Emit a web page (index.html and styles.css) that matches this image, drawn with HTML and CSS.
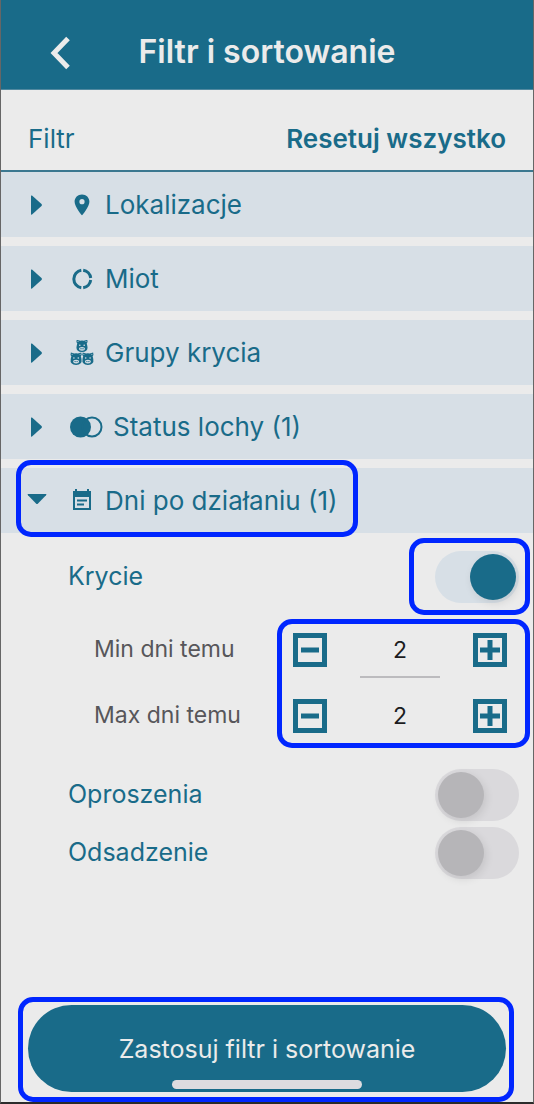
FILE: index.html
```
<!DOCTYPE html>
<html lang="pl">

<head>
    <meta charset="UTF-8">
    <meta name="viewport" content="width=device-width, initial-scale=1.0">
    <title>Filtr i sortowanie</title>
    <link rel="stylesheet" href="styles.css">
</head>

<body>
    <div class="app">
        <!-- Header -->
        <header class="header">
            <button class="back-button" type="button" aria-label="Wstecz">
                <svg width="22" height="34" viewBox="0 0 22 34">
                    <path d="M19 2.500L5 17L19 31.500" fill="none" stroke="currentColor" stroke-width="5" />
                </svg>
            </button>
            <h1 class="title">Filtr i sortowanie</h1>
        </header>

        <div class="toolbar">
            <h2 class="toolbar-title">Filtr</h2>
            <button class="reset-button" type="button">Resetuj wszystko</button>
        </div>

        <main class="filters">
            <button class="filter" type="button" aria-expanded="false">
                <span class="filter-content">
                    <svg class="arrow" viewBox="0 0 20 20"><path d="M4 1Q4 0 5 0.6L14.5 9Q15.5 10 14.5 11L5 19.4Q4 20 4 19Z" /></svg>
                    <svg class="icon" viewBox="0 0 26 26">
                        <path fill-rule="evenodd" d="M13 2.500C8.700 2.500 5.600 5.700 5.600 9.700C5.600 14.800 13 23.300 13 23.300S20.400 14.800 20.400 9.700C20.400 5.700 17.300 2.500 13 2.500ZM13 7.100A2.600 2.600 0 1 1 13 12.300A2.600 2.600 0 0 1 13 7.100Z" />
                    </svg>
                    <span>Lokalizacje</span>
                </span>
            </button>
            <button class="filter" type="button" aria-expanded="false">
                <span class="filter-content">
                    <svg class="arrow" viewBox="0 0 20 20"><path d="M4 1Q4 0 5 0.6L14.5 9Q15.5 10 14.5 11L5 19.4Q4 20 4 19Z" /></svg>
                    <svg class="icon" viewBox="0 0 26 26">
                        <g fill="none" stroke="currentColor" stroke-width="3">
                            <path d="M14.200 4.300A8.800 8.800 0 0 1 21.700 12" />
                            <path d="M21.700 14A8.800 8.800 0 0 1 14.200 21.700" />
                            <path d="M12.300 21.700A8.800 8.800 0 0 1 12.300 4.300" />
                        </g>
                    </svg>
                    <span>Miot</span>
                </span>
            </button>
            <button class="filter" type="button" aria-expanded="false">
                <span class="filter-content">
                    <svg class="arrow" viewBox="0 0 20 20"><path d="M4 1Q4 0 5 0.6L14.5 9Q15.5 10 14.5 11L5 19.4Q4 20 4 19Z" /></svg>
                    <svg class="icon" viewBox="0 0 26 26">
                        <defs>
                            <g id="pig">
                                <path d="M0.800 0.300L4.200 1.200Q6 0.700 7.800 1.200L11.200 0.300Q12.100 2.500 10.700 4Q11.200 5.300 11.400 7Q12.400 12.400 6 12.600Q-0.400 12.400 0.600 7Q0.800 5.300 1.300 4Q-0.100 2.500 0.800 0.300Z" />
                                <g fill="#d7dfe6">
                                    <circle cx="2" cy="2" r="0.500" />
                                    <circle cx="10" cy="2" r="0.500" />
                                    <circle cx="3.800" cy="5.700" r="0.800" />
                                    <circle cx="8.200" cy="5.700" r="0.800" />
                                    <ellipse cx="6" cy="9.300" rx="2.900" ry="1.900" />
                                </g>
                                <circle cx="5" cy="9.300" r="0.700" />
                                <circle cx="7" cy="9.300" r="0.700" />
                            </g>
                        </defs>
                        <use href="#pig" x="7" y="-0.500" />
                        <use href="#pig" x="1.100" y="12.300" />
                        <use href="#pig" x="12.900" y="12.300" />
                    </svg>
                    <span>Grupy krycia</span>
                </span>
            </button>
            <button class="filter" type="button" aria-expanded="false">
                <span class="filter-content">
                    <svg class="arrow" viewBox="0 0 20 20"><path d="M4 1Q4 0 5 0.6L14.5 9Q15.5 10 14.5 11L5 19.4Q4 20 4 19Z" /></svg>
                    <svg class="icon icon-wide" viewBox="0 0 34 26">
                        <circle cx="11.500" cy="13" r="10.500" />
                        <circle cx="23" cy="13" r="9.500" fill="none" stroke="currentColor" stroke-width="2" />
                    </svg>
                    <span>Status lochy (1)</span>
                </span>
            </button>
            <button class="filter" type="button" aria-expanded="true" aria-controls="days-panel">
                <span class="filter-content highlight highlight-filter">
                    <svg class="arrow" viewBox="0 0 20 20"><path d="M1 3Q0 3 1 4.200L9 12.500Q10 13.500 11 12.500L19 4.200Q20 3 19 3Z" /></svg>
                    <svg class="icon" viewBox="0 0 26 26">
                        <path fill-rule="evenodd" d="M6 1H8V3H18V1H20V3H22V22H4V3H6ZM6 9V20H20V9Z" />
                        <path d="M8 11.500H18V13.500H8ZM8 15.500H15V17.500H8Z" />
                    </svg>
                    <span>Dni po działaniu (1)</span>
                </span>
            </button>
        </main>

        <!-- Expanded panel -->
        <section class="panel" id="days-panel">
            <div class="option option-open">
                <label for="mating">Krycie</label>
                <span class="highlight highlight-toggle">
                    <input class="toggle" type="checkbox" id="mating" checked>
                </span>
            </div>

            <div class="ranges">
                <div class="range-labels">
                    <label for="min-days">Min dni temu</label>
                    <label for="max-days">Max dni temu</label>
                </div>
                <div class="steppers highlight highlight-steppers">
                    <div class="stepper">
                        <button class="step" type="button" aria-label="Zmniejsz min">
                            <svg viewBox="0 0 34 34"><path d="M8 17H26" /></svg>
                        </button>
                        <input class="days underlined" type="text" inputmode="numeric" id="min-days" value="2">
                        <button class="step" type="button" aria-label="Zwiększ min">
                            <svg viewBox="0 0 34 34"><path d="M7 17H27M17 7V27" /></svg>
                        </button>
                    </div>
                    <div class="stepper">
                        <button class="step" type="button" aria-label="Zmniejsz max">
                            <svg viewBox="0 0 34 34"><path d="M8 17H26" /></svg>
                        </button>
                        <input class="days" type="text" inputmode="numeric" id="max-days" value="2">
                        <button class="step" type="button" aria-label="Zwiększ max">
                            <svg viewBox="0 0 34 34"><path d="M7 17H27M17 7V27" /></svg>
                        </button>
                    </div>
                </div>
            </div>

            <div class="option">
                <label for="farrowing">Oproszenia</label>
                <input class="toggle" type="checkbox" id="farrowing">
            </div>
            <div class="option">
                <label for="weaning">Odsadzenie</label>
                <input class="toggle" type="checkbox" id="weaning">
            </div>
        </section>

        <footer class="footer">
            <div class="apply highlight highlight-apply">
                <button class="apply-button" type="button">Zastosuj filtr i sortowanie</button>
                <div class="home-bar"></div>
            </div>
        </footer>
    </div>
</body>

</html>
```
FILE: styles.css
```
* {
    box-sizing: border-box;
}

body {
    margin: 0;
    background-color: #ebebeb;
    color: #196b89;
    font-family: Inter, 'Liberation Sans', sans-serif;
    font-size: 25px;
}

button {
    border: 0;
    padding: 0;
    background: none;
    color: inherit;
    font: inherit;
    cursor: pointer;
}

svg {
    display: block;
    fill: currentColor;
    flex: none;
}

.app {
    display: flex;
    flex-direction: column;
    min-height: 100vh;
    border: 1px solid #666;
    border-top: 0;
    border-bottom: 2px solid #2b2b2b;
}

/* Header */
.header {
    display: grid;
    grid-template-columns: 48px 1fr 48px;
    align-items: center;
    height: 90px;
    padding: 14px 24px 0;
    background-color: #196b89;
    border-bottom: 1px solid #5189a0;
    color: #ebebeb;
}

.back-button {
    padding: 2px 0 0 24px;
}

.title {
    margin: 0;
    font-size: 32px;
    font-weight: 600;
    text-align: center;
    white-space: nowrap;
}

.toolbar {
    display: flex;
    align-items: center;
    justify-content: space-between;
    height: 82px;
    padding: 16px 27px 0;
    border-bottom: 2px solid #3b7890;
}

.toolbar-title {
    margin: 0;
    font-size: 26px;
    font-weight: 400;
}

.reset-button {
    font-size: 26px;
    font-weight: 600;
}

/* Filter list */
.filters {
    display: flex;
    flex-direction: column;
    gap: 9px;
}

.filter {
    display: flex;
    height: 65px;
    padding-left: 26px;
    background-color: #d7dfe6;
    font-size: 26px;
    text-align: left;
}

.filter-content {
    display: flex;
    align-items: center;
    height: 100%;
    white-space: nowrap;
}

.arrow {
    width: 20px;
    height: 20px;
    margin-right: 22px;
}

.icon {
    width: 26px;
    height: 26px;
    margin-right: 10px;
}

.icon-wide {
    width: 34px;
}

/* Expanded panel */
.panel {
    padding: 11px 14px 24px 67px;
}

.option {
    display: flex;
    align-items: center;
    justify-content: space-between;
    height: 58px;
}

.option label {
    padding-bottom: 2px;
}

.option-open {
    height: 66px;
}

.toggle {
    appearance: none;
    display: block;
    width: 84px;
    height: 52px;
    margin: 0;
    padding: 3px;
    border-radius: 26px;
    background-color: #dad9dc;
    cursor: pointer;
}

.toggle::before {
    content: "";
    display: block;
    width: 46px;
    height: 46px;
    border-radius: 50%;
    background-color: #b6b5b8;
    box-shadow: 2px 3px 8px rgba(0, 0, 0, .1);
}

.toggle:checked {
    background-color: #d7dfe6;
}

.toggle:checked::before {
    margin-left: auto;
    background-color: #196b89;
}

.ranges {
    display: flex;
    justify-content: space-between;
    margin: 7px 12px 17px 26px;
}

.range-labels {
    color: #57565a;
    font-size: 23px;
}

.range-labels label {
    display: flex;
    align-items: center;
    height: 66px;
    padding-bottom: 2px;
}

.steppers {
    width: 214px;
}

.stepper {
    display: flex;
    align-items: center;
    justify-content: space-between;
    height: 66px;
}

.step {
    border: 5px solid #196b89;
    width: 34px;
    height: 34px;
}

.step svg {
    width: 34px;
    height: 34px;
    margin: -5px;
    stroke: currentColor;
    stroke-width: 5;
}

.days {
    width: 80px;
    height: 56px;
    padding: 2px 0 0;
    border: 0;
    border-bottom: 2px solid transparent;
    background: none;
    color: #1c1c1e;
    font: inherit;
    font-size: 23px;
    text-align: center;
}

.underlined {
    border-bottom-color: #bcbbbe;
}

/* Footer */
.footer {
    margin-top: auto;
    padding: 0 27px 10px;
}

.apply-button {
    display: block;
    width: 100%;
    height: 87px;
    border-radius: 44px;
    background-color: #196b89;
    color: #ebebeb;
}

.home-bar {
    position: absolute;
    left: 50%;
    bottom: 3px;
    width: 190px;
    height: 9px;
    margin-left: -95px;
    border-radius: 5px;
    background-color: #dddce0;
}

/* Blue frames over the controls */
.highlight {
    position: relative;
}

.highlight::after {
    content: "";
    position: absolute;
    border: 5px solid #0026ff;
    border-radius: 15px;
    pointer-events: none;
}

.highlight-filter::after {
    inset: -8px -20px -4px -11px;
}

.highlight-toggle::after {
    inset: -13px -11px -12px -26px;
}

.highlight-steppers::after {
    inset: 2px -23px 1px -16px;
}

.highlight-apply::after {
    inset: -8px -8px -10px -10px;
}
```
